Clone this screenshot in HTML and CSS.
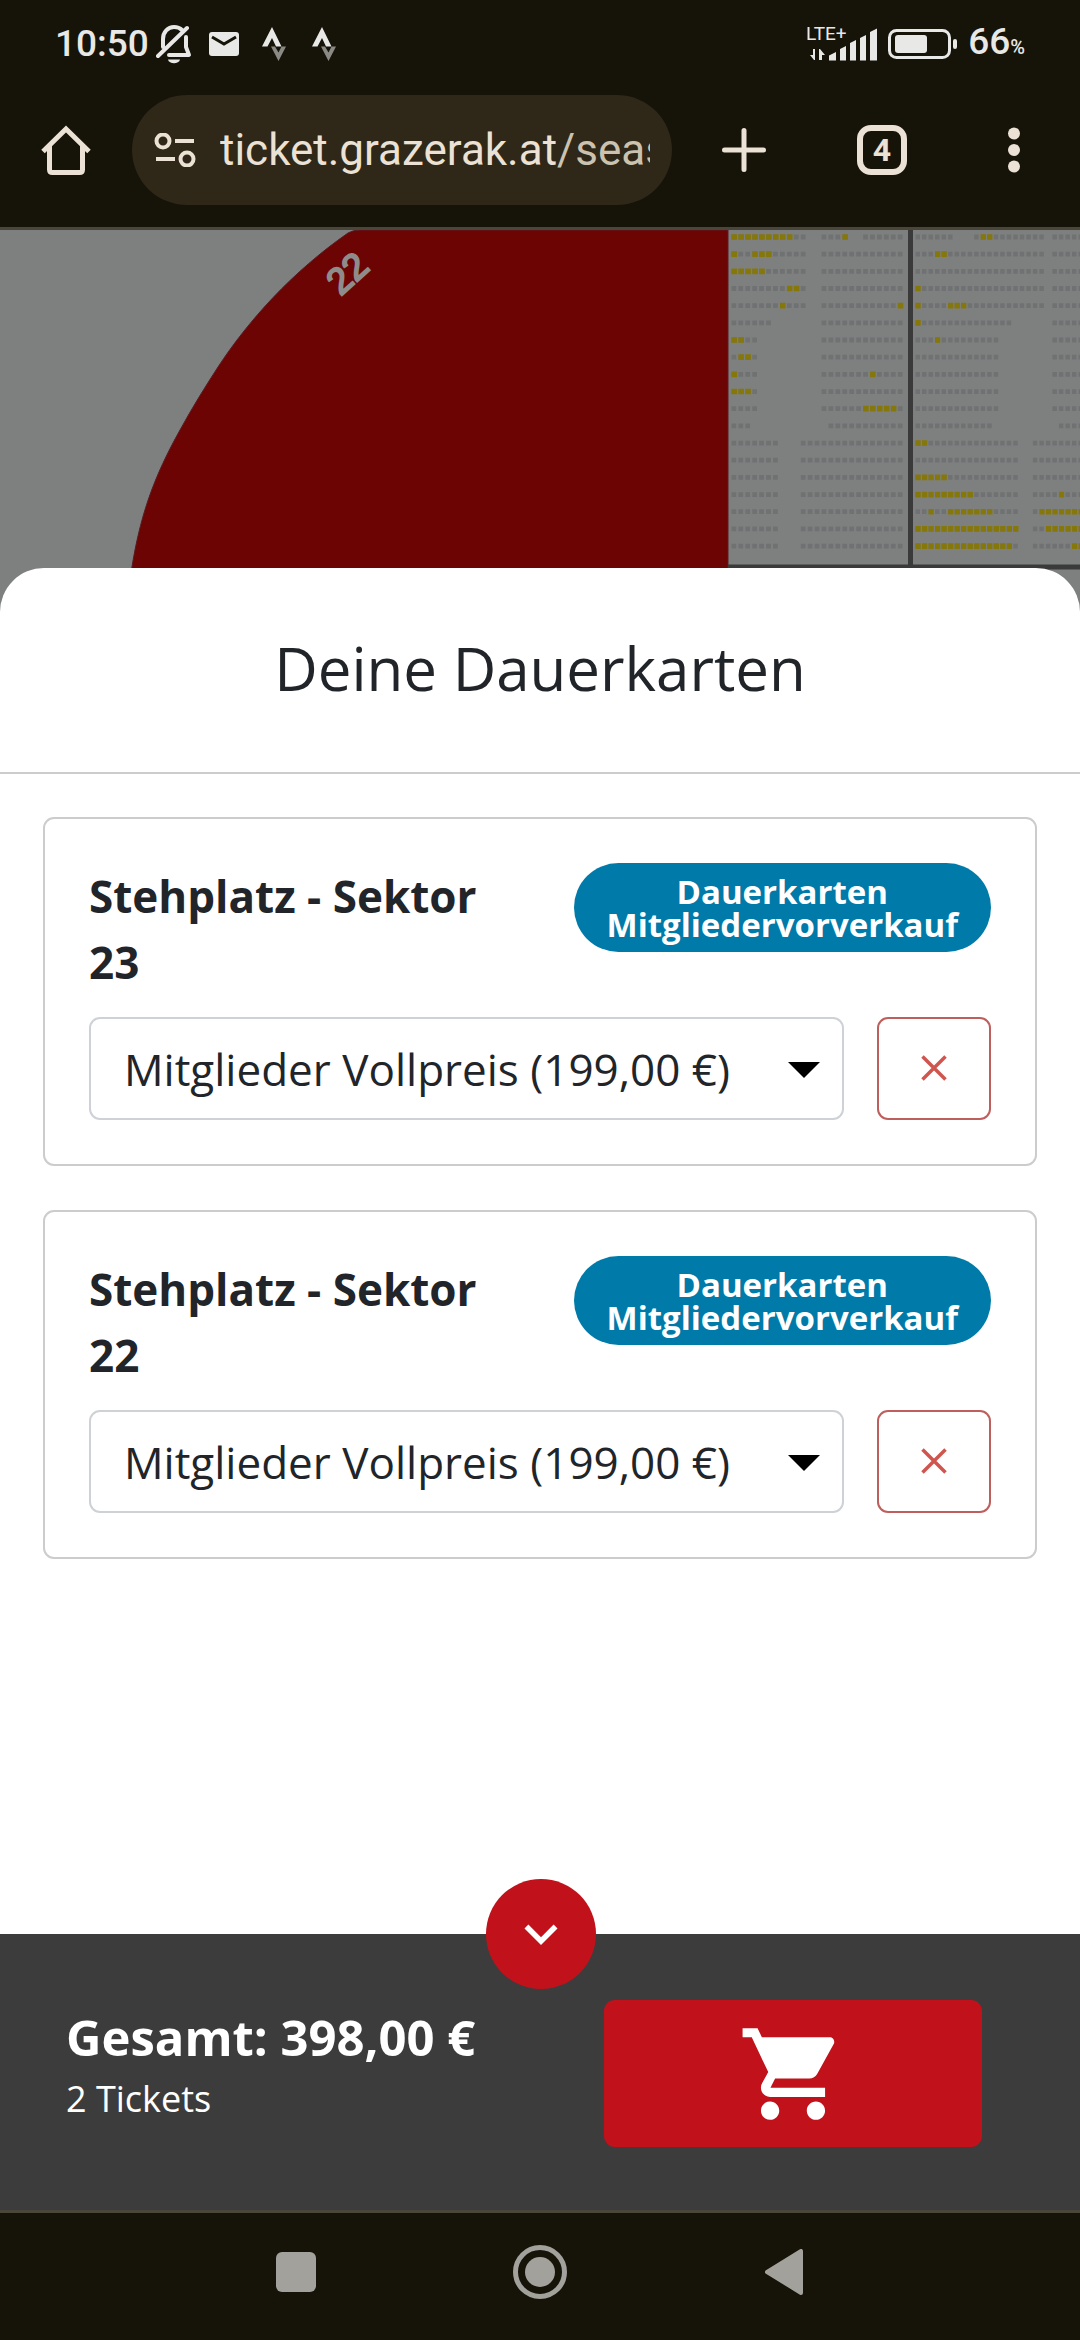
FILE: index.html
```html
<!DOCTYPE html>
<html lang="de">
<head>
<meta charset="utf-8">
<meta name="viewport" content="width=device-width, initial-scale=1">
<title>Deine Dauerkarten</title>
<link rel="stylesheet" href="styles.css">
</head>
<body>
<header class="chrome">
  <div class="status">
    <div class="status-left">
      <span class="status-text">10:50</span>
      <span class="status-icon">
        <svg width="36" height="40" viewBox="0 0 36 40" fill="none" stroke="#e8e8e6" stroke-width="4" stroke-linecap="round" stroke-linejoin="round">
          <path d="M7 23V15C7 8 12 3 18 3c3 0 6 1 8 3M30 13v10l3 8H13"/>
          <path d="M2 32 31 4"/>
          <path d="M12 35.500h12c-1 5-11 5-12 0z" fill="#e8e8e6" stroke="none"/>
        </svg>
      </span>
      <span class="status-icon">
        <svg width="30" height="24" viewBox="0 0 30 24">
          <rect width="30" height="24" rx="3" fill="#e8e8e6"/>
          <path d="M3 5 15 12 27 5" fill="none" stroke="#161309" stroke-width="3"/>
        </svg>
      </span>
      <span class="status-icon">
        <svg width="24" height="34" viewBox="0 0 24 34">
          <path d="M10 0 0 19.500h5.500L10 11l4 8.500h5.500z" fill="#e8e8e6"/>
          <path d="M9 19.500h4l3.500 6 3-6H24L16.500 34z" fill="#8b8984"/>
        </svg>
      </span>
      <span class="status-icon">
        <svg width="24" height="34" viewBox="0 0 24 34">
          <path d="M10 0 0 19.500h5.500L10 11l4 8.500h5.500z" fill="#e8e8e6"/>
          <path d="M9 19.500h4l3.500 6 3-6H24L16.500 34z" fill="#8b8984"/>
        </svg>
      </span>
    </div>
    <div class="status-right">
      <svg width="72" height="48" viewBox="0 -6 72 48" fill="#e8e8e6">
        <text class="network" x="0" y="14">LTE+</text>
        <path d="M9 23v11H8l-4-5h3v-6zM13 34V23h1l5 6h-3v5z"/>
        <path d="M23 34.500v-5l7-3.500v8.500zM34 34.500V23l6-3v14.500zM44 34.500V17l6-3v20.500zM54 34.500V12l6-3v25.500zM64 34.500V6l7-3.500v32z"/>
      </svg>
      <svg width="70" height="32" viewBox="0 0 70 32" fill="none">
        <rect x="1.500" y="2.500" width="60" height="27" rx="7" stroke="#e8e8e6" stroke-width="3"/>
        <rect x="7" y="7" width="32" height="18" rx="3" fill="#e8e8e6"/>
        <rect x="65" y="11" width="4" height="10" rx="2" fill="#e8e8e6"/>
      </svg>
      <span class="status-text">66<small class="percent">%</small></span>
    </div>
  </div>
  <nav class="toolbar" aria-label="Browser">
    <button class="tool tool-home" type="button" aria-label="Startseite">
      <svg width="50" height="50" viewBox="0 0 50 50" fill="none" stroke="#ebe1d4" stroke-width="5">
        <path d="M2 26.500 25 4l23 22.500" stroke-linejoin="miter"/>
        <path d="M8.500 21v23.500q0 3 3 3h27q3 0 3-3V21"/>
      </svg>
    </button>
    <button class="address" type="button">
      <svg class="site-icon" width="42" height="34" viewBox="0 0 42 34" fill="none" stroke="#ebe1d4" stroke-width="4">
        <circle cx="9" cy="8" r="6.500"/><path d="M21 8h19M2 26h19"/><circle cx="33" cy="26" r="6.500"/>
      </svg>
      <span class="url">ticket.grazerak.at<span class="url-path">/season</span></span>
    </button>
    <button class="tool tool-new" type="button" aria-label="Neuer Tab">
      <svg width="44" height="44" viewBox="0 0 44 44" stroke="#ebe1d4" stroke-width="5" stroke-linecap="round"><path d="M22 2.500v39M2.500 22h39"/></svg>
    </button>
    <button class="tool" type="button"><span class="tab-count">4</span></button>
    <button class="tool" type="button" aria-label="Menü">
      <svg width="12" height="46" viewBox="0 0 12 46" fill="#ebe1d4"><circle cx="6" cy="6.500" r="6"/><circle cx="6" cy="23" r="6"/><circle cx="6" cy="39.500" r="6"/></svg>
    </button>
  </nav>
</header>

<main class="page">
  <svg class="map" viewBox="0 0 1080 400" role="img" aria-label="Stadionplan">
    <rect width="1080" height="400" fill="#7e807f"/>
    <path d="M130 350 C139 285 155 245 180 200 C192 178 205 157 218 137 C248 91 292 42 348 3 Q353 0 360 0 H728 V350z" fill="#6c0404" stroke="#5a1c24" stroke-width="1"/>
    <path d="M910.500 0v337" stroke="#393a39" stroke-width="5"/>
    <path d="M728 337h352" stroke="#393a39" stroke-width="5"/>
    <text class="sector" transform="translate(347 43) rotate(-42)" y="13">22</text>
    <g transform="translate(731.500 7) scale(6.930 17.170)" fill="none" stroke-width=".28" stroke-dasharray=".68 .32">
      <path stroke="#707172" d="M0 0h11M13 0h4M19 0h6M0 1h11M13 1h12M0 2h11M13 2h12M0 3h11M13 3h12M0 4h11M13 4h12M0 5h6M13 5h12M0 6h4M13 6h12M0 7h4M13 7h12M0 8h4M13 8h12M0 9h4M13 9h12M0 10h4M13 10h12M0 11h3M14 11h11M0 12h7M10 12h15M0 13h7M10 13h15M0 14h7M10 14h15M0 15h7M10 15h15M0 16h7M10 16h15M0 17h7M10 17h15M0 18h7M10 18h15"/>
      <path stroke="#85770a" stroke-width=".33" stroke-dasharray=".8 .2" d="M0 0h9M16 0h1M0 1h1M3 1h3M0 2h5M8 3h2M7 4h1M24 4h1M0 6h2M1 7h2M0 8h1M20 8h1M0 9h3M19 10h5"/>
    </g>
    <g transform="translate(915.500 7) scale(6.520 17.170)" fill="none" stroke-width=".28" stroke-dasharray=".68 .32">
      <path stroke="#707172" d="M0 0h6M9 0h11M21 0h5M0 1h20M21 1h5M0 2h20M21 2h5M0 3h20M21 3h5M0 4h20M21 4h5M0 5h15M21 5h5M0 6h13M21 6h5M0 7h13M21 7h5M0 8h13M21 8h5M0 9h13M21 9h5M0 10h13M21 10h5M0 11h12M22 11h4M0 12h16M18 12h8M0 13h16M18 13h8M0 14h16M18 14h8M0 15h16M18 15h8M0 16h16M18 16h1M0 17h16M18 17h2M0 18h16M18 18h6"/>
      <path stroke="#85770a" stroke-width=".33" stroke-dasharray=".8 .2" d="M10 0h2M3 1h2M0 3h1M0 4h1M5 4h3M0 5h1M3 6h1M0 12h2M0 14h5M0 15h9M22 15h1M2 16h1M5 16h7M19 16h7M0 17h16M20 17h6M0 18h15M24 18h2"/>
    </g>
  </svg>

  <section class="sheet">
    <h1 class="sheet-title">Deine Dauerkarten</h1>
    <div class="cards">
      <article class="card">
        <div class="card-head">
          <h2 class="card-title">Stehplatz - Sektor 23</h2>
          <span class="badge">Dauerkarten<br>Mitgliedervorverkauf</span>
        </div>
        <div class="card-row">
          <div class="picker">
            <select class="select" aria-label="Preis für Sektor 23"><option>Mitglieder Vollpreis (199,00 €)</option></select>
            <svg class="caret" width="32" height="16" viewBox="0 0 32 16"><path d="M0 0h32L16 16z"/></svg>
          </div>
          <button class="remove" type="button" aria-label="Sektor 23 entfernen">
            <svg width="26" height="26" viewBox="0 0 26 26" stroke="#d0554f" stroke-width="3.500"><path d="M1.500 1.500l23 23M24.500 1.500l-23 23"/></svg>
          </button>
        </div>
      </article>
      <article class="card">
        <div class="card-head">
          <h2 class="card-title">Stehplatz - Sektor 22</h2>
          <span class="badge">Dauerkarten<br>Mitgliedervorverkauf</span>
        </div>
        <div class="card-row">
          <div class="picker">
            <select class="select" aria-label="Preis für Sektor 22"><option>Mitglieder Vollpreis (199,00 €)</option></select>
            <svg class="caret" width="32" height="16" viewBox="0 0 32 16"><path d="M0 0h32L16 16z"/></svg>
          </div>
          <button class="remove" type="button" aria-label="Sektor 22 entfernen">
            <svg width="26" height="26" viewBox="0 0 26 26" stroke="#d0554f" stroke-width="3.500"><path d="M1.500 1.500l23 23M24.500 1.500l-23 23"/></svg>
          </button>
        </div>
      </article>
    </div>
  </section>
</main>

<footer class="summary">
  <button class="toggle" type="button" aria-label="Einklappen">
    <svg width="66" height="66" viewBox="0 0 24 24" fill="#fff"><path d="M7.410 8.590 12 13.170l4.590-4.580L18 10l-6 6-6-6z"/></svg>
  </button>
  <div class="totals">
    <strong class="total">Gesamt: 398,00 €</strong>
    <span class="count">2 Tickets</span>
  </div>
  <button class="checkout" type="button" aria-label="Zum Warenkorb">
    <svg width="110" height="110" viewBox="0 0 24 24" fill="#fff"><path d="M7 18c-1.100 0-1.990.9-1.990 2S5.900 22 7 22s2-.9 2-2-.9-2-2-2zM1 2v2h2l3.600 7.590-1.350 2.450c-.16.280-.25.610-.25.960 0 1.100.9 2 2 2h12v-2H7.080l1.020-2h7.450c.75 0 1.410-.41 1.750-1.030l3.580-6.490c.08-.14.120-.31.120-.48 0-.55-.45-1-1-1H5.210l-.94-2H1zm16 16c-1.100 0-1.990.9-1.990 2s.890 2 1.990 2 2-.9 2-2-.9-2-2-2z"/></svg>
  </button>
</footer>

<nav class="system" aria-label="System">
  <button class="key" type="button" aria-label="Übersicht"><svg width="40" height="40" viewBox="0 0 40 40"><rect width="40" height="40" rx="6" fill="#a3a19b"/></svg></button>
  <button class="key" type="button" aria-label="Home"><svg width="54" height="54" viewBox="0 0 54 54"><circle cx="27" cy="27" r="24.500" fill="none" stroke="#a3a19b" stroke-width="5"/><circle cx="27" cy="27" r="15" fill="#a3a19b"/></svg></button>
  <button class="key" type="button" aria-label="Zurück"><svg width="38" height="46" viewBox="0 0 38 46"><path d="M2 23 36 2v42z" fill="#a3a19b" stroke="#a3a19b" stroke-width="4" stroke-linejoin="round"/></svg></button>
</nav>
</body>
</html>
```
FILE: styles.css
```css
* {
  box-sizing: border-box;
}

body {
  display: flex;
  flex-direction: column;
  min-height: 100vh;
  margin: 0;
  color: #212529;
  background: #fff;
  font-family: "Open Sans", "Noto Sans", sans-serif;
}

svg {
  display: block;
  flex: none;
}

button {
  padding: 0;
  border: 0;
  color: inherit;
  background: none;
  font: inherit;
}

/* Phone status bar and browser toolbar */
.chrome {
  padding-bottom: 22px;
  border-bottom: 3px solid #4b463a;
  color: #e8e8e6;
  background: #161309;
  font-family: Roboto, sans-serif;
}

.status {
  display: flex;
  justify-content: space-between;
  height: 95px;
  padding: 22px 55px 29px;
}

.status-left,
.status-right {
  display: flex;
  align-items: center;
}

.status-right {
  gap: 10px;
}

.status-text {
  font-size: 37px;
  font-weight: 500;
  line-height: 44px;
}

.status-icon {
  display: grid;
  place-items: center;
  width: 50px;
}

.network {
  font-size: 19px;
}

.percent {
  font-size: 20px;
}

.toolbar {
  display: flex;
  height: 110px;
}

.tool {
  display: grid;
  flex: none;
  place-items: center;
  width: 132px;
}

.tool-new {
  width: 144px;
}

.address {
  display: flex;
  flex: 1;
  align-items: center;
  gap: 24px;
  min-width: 0;
  padding: 0 22px;
  border-radius: 55px;
  color: #ebe1d4;
  background: #2f2717;
}

.url {
  flex: 1;
  overflow: hidden;
  font-size: 44px;
  line-height: 55px;
  text-align: left;
  white-space: nowrap;
}

.url-path {
  color: #cbc3b0;
}

.tab-count {
  display: grid;
  place-items: center;
  width: 50px;
  height: 50px;
  border: 6px solid #ebe1d4;
  border-radius: 14px;
  color: #ebe1d4;
  font-size: 32px;
  font-weight: 700;
  line-height: 38px;
}

/* Dimmed seat map with the ticket sheet over it */
.page {
  display: flex;
  flex: 1;
  flex-direction: column;
  background: #7e807f;
}

.map {
  width: 100%;
  height: auto;
}

.sector {
  fill: #8f8c8c;
  font: 37px "Liberation Sans", sans-serif;
  stroke: #8f8c8c;
  stroke-width: 2px;
  text-anchor: middle;
}

.sheet {
  position: relative;
  flex: 1;
  margin-top: -62px;
  border-radius: 44px 44px 0 0;
  background: #fff;
}

.sheet-title {
  margin: 0;
  padding: 64px 44px 68px;
  border-bottom: 2px solid #ccc;
  font-size: 60px;
  font-weight: 400;
  line-height: 72px;
  text-align: center;
}

.cards {
  display: grid;
  gap: 44px;
  padding: 43px;
}

.card {
  display: grid;
  gap: 22px;
  padding: 44px;
  border: 2px solid #ccc;
  border-radius: 11px;
}

.card-head {
  display: flex;
  align-items: flex-start;
  justify-content: space-between;
  gap: 66px;
}

.card-title {
  margin: 0;
  font-size: 44px;
  font-weight: 700;
  line-height: 66px;
}

.badge {
  flex: none;
  padding: 12px 33px 11px;
  border-radius: 45px;
  color: #fff;
  background: #007aa8;
  font-size: 33px;
  font-weight: 700;
  line-height: 33px;
  text-align: center;
}

.card-row {
  display: flex;
  gap: 33px;
}

.picker {
  position: relative;
  flex: 1;
}

.select {
  width: 100%;
  height: 103px;
  padding: 0 88px 0 33px;
  border: 2px solid #ced2d6;
  border-radius: 11px;
  color: #212529;
  background: #fff;
  font: inherit;
  font-size: 44px;
  appearance: none;
}

.caret {
  position: absolute;
  top: 45px;
  right: 24px;
  pointer-events: none;
}

.remove {
  display: grid;
  place-items: center;
  width: 114px;
  height: 103px;
  padding-bottom: 2px;
  border: 2px solid #bf5f5d;
  border-radius: 11px;
}

/* Basket summary */
.summary {
  position: relative;
  display: flex;
  align-items: flex-start;
  justify-content: space-between;
  padding: 66px 98px 63px 66px;
  border-bottom: 3px solid #4b463a;
  color: #fff;
  background: #3c3c3c;
}

.toggle {
  position: absolute;
  top: -55px;
  left: calc(50% - 54px);
  display: grid;
  place-items: center;
  width: 110px;
  height: 110px;
  border-radius: 50%;
  background: #c1121b;
}

.totals {
  display: grid;
}

.total {
  font-size: 49px;
  line-height: 75px;
}

.count {
  font-size: 36px;
  line-height: 48px;
}

.checkout {
  display: grid;
  place-items: center;
  width: 378px;
  height: 147px;
  border-radius: 11px;
  background: #c1121b;
}

/* Android navigation keys */
.system {
  display: flex;
  justify-content: center;
  height: 127px;
  padding-bottom: 10px;
  background: #161309;
}

.key {
  display: grid;
  place-items: center;
  width: 244px;
}
```
